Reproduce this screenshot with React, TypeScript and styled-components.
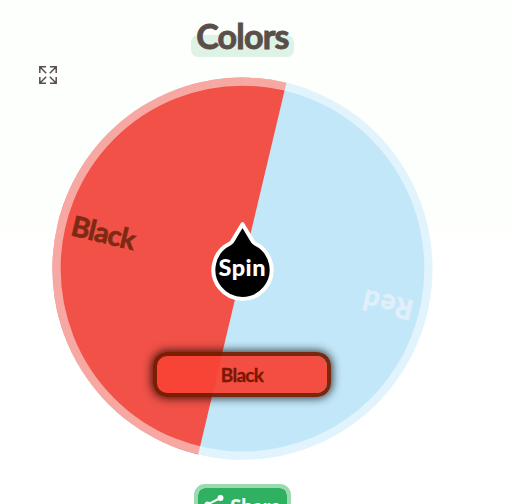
import React from "react";
import styled, { createGlobalStyle } from "styled-components";

const GlobalStyle = createGlobalStyle`
  html, body { margin: 0; padding: 0; height: 100%; overflow: hidden; }
  body { background: linear-gradient(#fcfffb 0, #fdfffc 215px, #ffffff 250px); }
  * { box-sizing: border-box; }
`;

const Page = styled.main`
  width: 485px;
  height: 504px;
  display: flex;
  flex-direction: column;
  align-items: center;
  overflow: hidden;
  font-family: Lato, "Noto Sans", sans-serif;
`;

const Header = styled.header`
  height: 65px;
  flex-shrink: 0;
  padding-top: 14px;
`;

const Title = styled.h1`
  position: relative;
  isolation: isolate;
  width: 103px;
  height: 43px;
  margin: 0;
  color: #5a4e4a;
  font-size: 34px;
  font-weight: 700;
  line-height: 43px;
  letter-spacing: -0.8px;
  text-align: center;
  white-space: nowrap;
  -webkit-text-stroke: 0.9px #5a4e4a;
`;

const TitleMark = styled.span`
  position: absolute;
  inset: 21px 0 0;
  z-index: -1;
  border-radius: 7px;
  background: #def3e6;
`;

const Stage = styled.section`
  position: relative;
  width: 100%;
  height: 419px;
  flex-shrink: 0;
`;

const Drawing = styled.svg`
  display: block;
  width: 100%;
  height: 100%;
`;

const ExpandButton = styled.button`
  position: absolute;
  left: 39px;
  top: 1px;
  width: 18px;
  height: 18px;
  padding: 0;
  border: 0;
  background: none;
  color: #5a4e4a;

  svg { display: block; }
`;

const SliceLabel = styled.text`
  font-family: Lato, sans-serif;
  font-weight: 700;
  font-size: 28px;
`;

const SpinLabel = styled.text`
  font-family: Lato, sans-serif;
  font-weight: 900;
  font-size: 23.5px;
  fill: #fff;
`;

const Result = styled.div`
  position: absolute;
  left: 153px;
  top: 287px;
  width: 178px;
  height: 45px;
  display: flex;
  align-items: center;
  justify-content: center;
  border: 4px solid rgba(115, 28, 0, 0.94);
  border-radius: 14px;
  background: rgba(246, 67, 54, 0.94) padding-box;
  box-shadow: 0 0 10px 1px rgba(0, 0, 0, 0.8);
  color: #7a1800;
  font-size: 19px;
  font-weight: 700;
  line-height: 37px;
  letter-spacing: -0.7px;
  -webkit-text-stroke: 0.3px #7a1800;
`;

const ShareButton = styled.button`
  width: 97px;
  height: 45px;
  flex-shrink: 0;
  display: flex;
  justify-content: center;
  align-items: flex-start;
  gap: 6px;
  padding: 7px 0 0;
  border: 4px solid #9bd9b1;
  border-radius: 11px;
  background: #30b162;
  background-clip: padding-box;
  color: #fff;
  font-family: Lato, sans-serif;
  font-size: 20px;
  font-weight: 900;
  line-height: 22px;
`;

const ShareIcon = styled.svg`
  width: 20px;
  height: 19px;
  flex-shrink: 0;
`;

export default function App() {
  return (
    <>
      <GlobalStyle />
      <Page>
        <Header>
          <Title><TitleMark />Colors</Title>
        </Header>
        <Stage>
          <Drawing viewBox="0 65 485 419" aria-label="Color wheel">
            <ellipse cx="242.5" cy="268.6" rx="189.9" ry="191" fill="#c2e7f8" />
            <path d="M286.4 82.7 A189.9 191 0 0 0 198.2 454.4 Z" fill="#f15146" />
            <ellipse cx="242.5" cy="268.6" rx="186" ry="187" fill="none" stroke="#fff" strokeOpacity="0.5" strokeWidth="8.3" />
            <SliceLabel transform="translate(69.8 235) rotate(13.5)" textLength="65" fill="#7d2913" stroke="#7d2913" strokeWidth="0.7">Black</SliceLabel>
            <SliceLabel transform="translate(415 301) rotate(193.5)" textLength="50.5" fill="#e0effa" stroke="#e0effa" strokeWidth="0.7">Red</SliceLabel>
            <path d="M242.5 225 L232 242.4 Q231 243.8 229.5 244.6 A29.1 29.1 0 1 0 255.5 244.6 Q254 243.8 253 242.4 Z" transform="translate(0 -.8)" fill="#000" stroke="#fff" strokeWidth="4" strokeLinejoin="round" />
            <SpinLabel x="218.5" y="276" textLength="47">Spin</SpinLabel>
          </Drawing>
          <ExpandButton aria-label="Fullscreen">
            <svg width="18" height="18" viewBox="0 0 18 18" fill="none" stroke="currentColor" strokeWidth="1.5">
              <path d="M.8 7V.8H7M1 1l6.2 6.2M11 .8h6.2V7M17 1l-6.2 6.2M.8 11v6.2H7M1 17l6.2-6.2M11 17.2h6.2V11M17 17l-6.2-6.2" />
            </svg>
          </ExpandButton>
          <Result>Black</Result>
        </Stage>
        <ShareButton>
          <ShareIcon viewBox="0 0 20 19" fill="currentColor">
            <path d="M16.5 3 3.5 9.5 16.5 16" fill="none" stroke="currentColor" strokeWidth="2" />
            <circle cx="16.5" cy="3" r="3" />
            <circle cx="3.5" cy="9.5" r="3" />
            <circle cx="16.5" cy="16" r="3" />
          </ShareIcon>
          Share
        </ShareButton>
      </Page>
    </>
  );
}
